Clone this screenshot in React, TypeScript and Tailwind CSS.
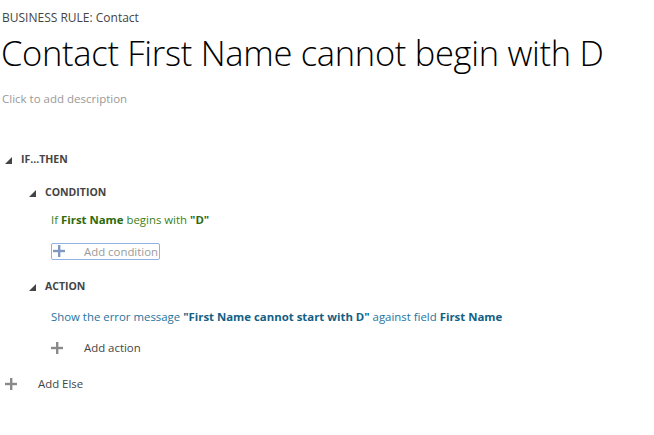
import React from "react";

const Tri = () => (
  <svg width="7" height="7" viewBox="0 0 7 7" className="shrink-0">
    <polygon points="7,0 7,7 0,7" fill="#444" />
  </svg>
);

const Plus = ({ color = "#8a8a8a" }: { color?: string }) => (
  <svg width="12" height="12" viewBox="0 0 12 12" className="shrink-0">
    <rect x="5" y="0" width="2.4" height="12" fill={color} />
    <rect x="0" y="4.8" width="12" height="2.4" fill={color} />
  </svg>
);

export default function App() {
  return (
    <div
      className="w-[654px] h-[435px] bg-white text-[#444] overflow-hidden"
      style={{ fontFamily: '"Open Sans", "Noto Sans", sans-serif' }}
    >
      <div className="pl-[2px] pt-[10px] text-[12px] leading-[16px] text-[#444]">
        BUSINESS RULE: Contact
      </div>
      <div className="pl-[1px] mt-[6px] text-[34.5px] leading-[42px] font-light text-black tracking-[-0.3px] whitespace-nowrap">
        Contact First Name cannot begin with D
      </div>
      <div className="pl-[2px] mt-[17px] text-[11.5px] leading-[16px] text-[#999]">
        Click to add description
      </div>

      <div className="mt-[45px] flex items-center gap-[9px] pl-[5px] h-[16px]">
        <Tri />
        <span className="text-[10.5px] font-bold text-[#444]">IF...THEN</span>
      </div>

      <div className="mt-[17px] flex items-center gap-[9px] pl-[29px] h-[16px]">
        <Tri />
        <span className="text-[10.5px] font-bold text-[#444]">CONDITION</span>
      </div>

      <div className="mt-[11px] pl-[51px] text-[11.4px] leading-[16px] text-[#3b7f14]">
        If <span className="font-bold text-[#2d6a0c]">First Name</span> begins with{" "}
        <span className="font-bold text-[#2d6a0c]">"D"</span>
      </div>

      <div className="mt-[11px] pl-[51px]">
        <div className="inline-flex items-center w-[109px] h-[17px] border border-[#8fb1e6] rounded-[2px] whitespace-nowrap">
          <div className="pl-[1px]">
            <Plus color="#7f98c0" />
          </div>
          <span className="ml-[19px] text-[11.4px] leading-[15px] text-[#9a9a9a]">Add condition</span>
        </div>
      </div>

      <div className="mt-[16px] flex items-center gap-[9px] pl-[29px] h-[16px]">
        <Tri />
        <span className="text-[10.5px] font-bold text-[#444]">ACTION</span>
      </div>

      <div className="mt-[14px] pl-[51px] text-[11.4px] leading-[16px] text-[#1e74a0] whitespace-nowrap">
        Show the error message{" "}
        <span className="font-bold text-[#135f86]">"First Name cannot start with D"</span> against field{" "}
        <span className="font-bold text-[#135f86]">First Name</span>
      </div>

      <div className="mt-[15px] pl-[51px] flex items-center h-[16px]">
        <Plus />
        <span className="ml-[21px] text-[11.4px] text-[#444]">Add action</span>
      </div>

      <div className="mt-[20px] pl-[5px] flex items-center h-[16px]">
        <Plus />
        <span className="ml-[21px] text-[11.4px] text-[#444]">Add Else</span>
      </div>
    </div>
  );
}
